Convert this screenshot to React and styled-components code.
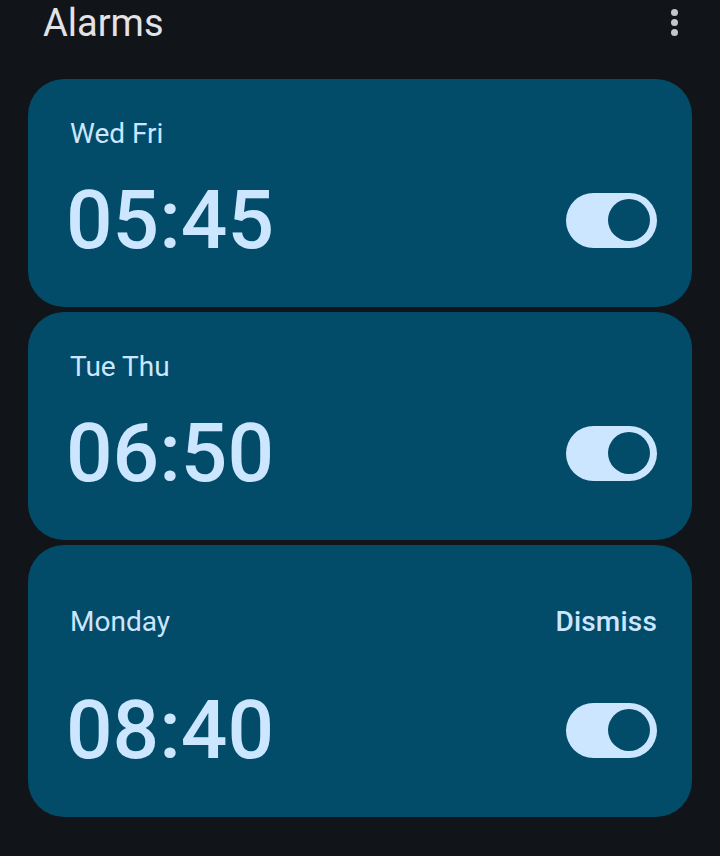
import React, { useState } from 'react'
import styled, { createGlobalStyle } from 'styled-components'

const GlobalStyle = createGlobalStyle`
  html, body {
    margin: 0;
    padding: 0;
    background: #111418;
  }
  body {
    font-family: Roboto, 'Noto Sans', 'Liberation Sans', sans-serif;
  }
`

const alarms = [
  { id: 1, days: 'Wed Fri', time: '05:45', on: true },
  { id: 2, days: 'Tue Thu', time: '06:50', on: true },
  { id: 3, days: 'Monday', time: '08:40', on: true, dismiss: true },
]

const App = () => {
  const [state, setState] = useState(() =>
    Object.fromEntries(alarms.map(a => [a.id, a.on]))
  )

  const toggle = id => setState(s => ({ ...s, [id]: !s[id] }))

  return (
    <>
      <GlobalStyle />
      <Screen>
        <Header>
          <Title>Alarms</Title>
          <MenuButton aria-label='More options'>
            <Dot />
            <Dot />
            <Dot />
          </MenuButton>
        </Header>

        <List>
          {alarms.map(alarm => (
            <Card key={alarm.id}>
              <TopRow $tall={alarm.dismiss}>
                <Days>{alarm.days}</Days>
                {alarm.dismiss && <Dismiss>Dismiss</Dismiss>}
              </TopRow>
              <TimeRow>
                <Time>{alarm.time}</Time>
                <Switch
                  $on={state[alarm.id]}
                  onClick={() => toggle(alarm.id)}
                  aria-pressed={state[alarm.id]}
                >
                  <Thumb />
                </Switch>
              </TimeRow>
            </Card>
          ))}
        </List>
      </Screen>
    </>
  )
}

const Screen = styled.div`
  width: 720px;
  min-height: 856px;
  box-sizing: border-box;
  padding: 0 28px;
  background: #111418;
`

const Header = styled.header`
  height: 79px;
  display: flex;
  justify-content: space-between;
  align-items: flex-start;
  padding-left: 15px;
`

const Title = styled.h1`
  margin: 0;
  font-size: 38px;
  line-height: 46px;
  font-weight: 400;
  color: #e2e2e8;
`

const MenuButton = styled.button`
  margin: 9px 14px 0 0;
  padding: 0;
  border: none;
  background: none;
  display: flex;
  flex-direction: column;
  gap: 3px;
  cursor: pointer;
`

const Dot = styled.span`
  width: 7px;
  height: 7px;
  border-radius: 50%;
  background: #c4c6cc;
`

const List = styled.div`
  display: flex;
  flex-direction: column;
  gap: 5px;
`

const Card = styled.div`
  background: #024b69;
  border-radius: 36px;
  padding: 39px 35px 46px 42px;
  display: flex;
  flex-direction: column;
  gap: 29px;
  color: #cce6ff;
`

const TopRow = styled.div`
  display: flex;
  justify-content: space-between;
  align-items: center;
  min-height: ${p => (p.$tall ? '76px' : '32px')};
`

const Days = styled.span`
  font-size: 28px;
  line-height: 32px;
  font-weight: 400;
`

const Dismiss = styled.button`
  border: none;
  background: none;
  padding: 0;
  font-family: inherit;
  font-size: 28px;
  line-height: 32px;
  font-weight: 500;
  letter-spacing: 0.2px;
  color: #cce6ff;
  cursor: pointer;
`

const TimeRow = styled.div`
  display: flex;
  justify-content: space-between;
  align-items: center;
`

const Time = styled.span`
  font-size: 82px;
  line-height: 82px;
  font-weight: 500;
  margin-left: -4px;
`

const Switch = styled.button`
  width: 91px;
  height: 55px;
  border: none;
  border-radius: 28px;
  padding: 0 7px;
  box-sizing: border-box;
  background: ${p => (p.$on ? '#cce6ff' : 'transparent')};
  display: flex;
  align-items: center;
  justify-content: ${p => (p.$on ? 'flex-end' : 'flex-start')};
  cursor: pointer;
`

const Thumb = styled.span`
  width: 42px;
  height: 42px;
  border-radius: 50%;
  background: #024b69;
`

export default App
